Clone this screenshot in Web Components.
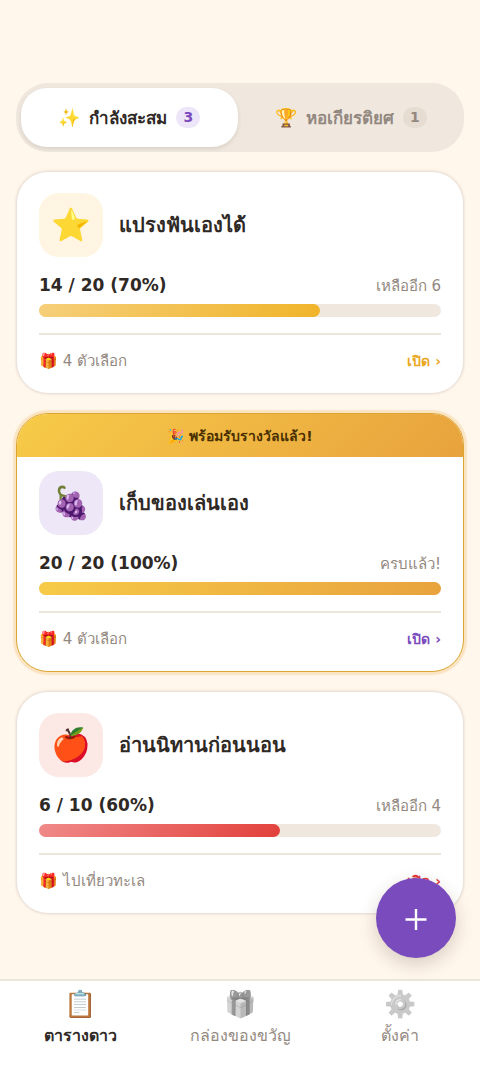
<!DOCTYPE html>
<html lang="th">
<head>
<meta charset="utf-8">
<meta name="viewport" content="width=device-width, initial-scale=1">
<title>ตารางดาว</title>
<style>
  body {
    margin: 0;
    background: #fff6ec;
    color: #2f2926;
    font-family: "DejaVu Sans", sans-serif;
    --muted: #93887f;
    --line: #ece5dc;
    --purple: #7a4bbd;
  }
</style>
</head>
<body>

<star-app>
  <star-tabs>
    <star-tab icon="✨" count="3" active>กำลังสะสม</star-tab>
    <star-tab icon="🏆" count="1">หอเกียรติยศ</star-tab>
  </star-tabs>

  <star-card icon="⭐" done="14" total="20" left="เหลืออีก 6" reward="4 ตัวเลือก"
    style="--tile: #fff5e2; --from: #f6cf7a; --to: #f0b429; --accent: #eaa722">แปรงฟันเองได้</star-card>
  <star-card icon="🍇" done="20" total="20" left="ครบแล้ว!" reward="4 ตัวเลือก" ready
    style="--tile: #ede7f8; --from: #f7cb48; --to: #e8a23d; --accent: #7a4bbd">เก็บของเล่นเอง</star-card>
  <star-card icon="🍎" done="6" total="10" left="เหลืออีก 4" reward="ไปเที่ยวทะเล"
    style="--tile: #fce8e5; --from: #f08a8a; --to: #e2403a; --accent: #e0393a">อ่านนิทานก่อนนอน</star-card>

  <add-button slot="fab"></add-button>
  <bottom-nav slot="nav">
    <nav-item icon="📋" active>ตารางดาว</nav-item>
    <nav-item icon="🎁">กล่องของขวัญ</nav-item>
    <nav-item icon="⚙️">ตั้งค่า</nav-item>
  </bottom-nav>
</star-app>

<script>
// Base class: clones the markup of the element into an open shadow root
class BaseElement extends HTMLElement {
  connectedCallback() {
    if (this.shadowRoot) return;
    const template = document.createElement('template');
    template.innerHTML = this.render();
    this.attachShadow({ mode: 'open' }).appendChild(template.content.cloneNode(true));
  }
}

class StarApp extends BaseElement {
  render() {
    return `
      <style>
        :host {
          display: flex;
          flex-direction: column;
          min-height: 100vh;
        }
        main {
          flex: 1;
          display: flex;
          flex-direction: column;
          gap: 19px;
          padding: 83px 16px 48px;
        }
      </style>
      <main><slot></slot></main>
      <slot name="fab"></slot>
      <slot name="nav"></slot>
    `;
  }
}

class StarTabs extends BaseElement {
  render() {
    return `
      <style>
        :host {
          display: flex;
          gap: 5px;
          padding: 5px;
          border-radius: 32px;
          background: #f0e8df;
        }
      </style>
      <slot></slot>
    `;
  }
}

class StarTab extends BaseElement {
  render() {
    return `
      <style>
        :host {
          display: flex;
          flex: 1;
        }
        button {
          flex: 1;
          display: flex;
          align-items: center;
          justify-content: center;
          gap: 9px;
          height: 59px;
          padding: 0;
          border: 0;
          border-radius: 26px;
          background: none;
          color: var(--muted);
          font: bold 17px/24px "DejaVu Sans", sans-serif;
          white-space: nowrap;
          cursor: pointer;
        }
        .icon {
          font-size: 18px;
        }
        .count {
          min-width: 24px;
          border-radius: 11px;
          background: #e6dcd2;
          font-size: 14px;
          line-height: 21px;
          text-align: center;
        }
        :host([active]) button {
          background: #fff;
          color: #2f2926;
          box-shadow: 0 2px 4px rgba(60, 40, 20, 0.12);
        }
        :host([active]) .count {
          background: #ede5f8;
          color: var(--purple);
        }
      </style>
      <button type="button" aria-pressed="${this.hasAttribute('active')}">
        <span class="icon">${this.getAttribute('icon')}</span>
        <slot></slot>
        <span class="count">${this.getAttribute('count')}</span>
      </button>
    `;
  }
}

class StarCard extends BaseElement {
  render() {
    const done = Number(this.getAttribute('done'));
    const total = Number(this.getAttribute('total'));
    const percent = Math.round(done / total * 100);
    const banner = this.hasAttribute('ready')
      ? '<div class="banner">🎉 พร้อมรับรางวัลแล้ว!</div>' : '';
    return `
      <style>
        :host {
          display: block;
          overflow: hidden;
          border: 1px solid #ebe2d9;
          border-radius: 32px;
          background: #fff;
          box-shadow: 0 0 2px 1px rgba(90, 60, 30, 0.07);
        }
        :host([ready]) {
          border-color: #dca433;
          box-shadow: 0 0 1px 3px #fae4c1;
        }
        .banner {
          padding: 11px 16px 9px;
          background: linear-gradient(135deg, #f7cb48, #e8a23d);
          color: #4a3000;
          font-size: 14px;
          font-weight: bold;
          line-height: 23px;
          text-align: center;
        }
        .body {
          padding: 21px 22px 20px;
        }
        :host([ready]) .body {
          padding-top: 14px;
        }
        header {
          display: flex;
          align-items: center;
          gap: 16px;
        }
        .tile {
          width: 64px;
          border-radius: 20px;
          background: var(--tile);
          font-size: 32px;
          line-height: 64px;
          text-align: center;
        }
        h2 {
          flex: 1;
          margin: 0;
          font-size: 20px;
          line-height: 28px;
        }
        .row {
          display: flex;
          align-items: center;
          justify-content: space-between;
          font-size: 15px;
          line-height: 24px;
          color: var(--muted);
        }
        .stats {
          align-items: baseline;
          margin: 16px 0 6px;
        }
        .stats strong {
          color: #2f2926;
          font-size: 17px;
        }
        .track {
          height: 13px;
          border-radius: 7px;
          background: #f0e8df;
        }
        .fill {
          width: ${percent}%;
          height: 100%;
          border-radius: 7px;
          background: linear-gradient(135deg, var(--from), var(--to));
        }
        footer {
          margin-top: 16px;
          padding-top: 14px;
          border-top: 2px solid var(--line);
        }
        a {
          color: var(--accent);
          font-size: 14px;
          font-weight: bold;
          text-decoration: none;
        }
      </style>
      ${banner}
      <div class="body">
        <header>
          <span class="tile">${this.getAttribute('icon')}</span>
          <h2><slot></slot></h2>
        </header>
        <div class="row stats">
          <strong>${done} / ${total} (${percent}%)</strong>
          <span>${this.getAttribute('left')}</span>
        </div>
        <div class="track" role="progressbar" aria-label="ความคืบหน้า" aria-valuenow="${percent}">
          <div class="fill"></div>
        </div>
        <footer class="row">
          <span>🎁 ${this.getAttribute('reward')}</span>
          <a href="#open">เปิด ›</a>
        </footer>
      </div>
    `;
  }
}

class AddButton extends BaseElement {
  render() {
    return `
      <style>
        /* Floats over the card list */
        :host {
          position: fixed;
          right: 24px;
          bottom: 109px;
          z-index: 2;
        }
        button {
          display: flex;
          align-items: center;
          justify-content: center;
          width: 80px;
          height: 80px;
          padding: 0;
          border: 0;
          border-radius: 50%;
          background: var(--purple);
          box-shadow: 0 6px 18px rgba(60, 40, 20, 0.2);
          cursor: pointer;
        }
      </style>
      <button type="button" aria-label="เพิ่ม">
        <svg width="24" height="24" viewBox="0 0 24 24" fill="none" stroke="#fff" stroke-width="2.4">
          <path d="M12 3v21M1.500 13.500h21"/>
        </svg>
      </button>
    `;
  }
}

class BottomNav extends BaseElement {
  render() {
    return `
      <style>
        :host {
          position: sticky;
          bottom: 0;
          z-index: 1;
          display: block;
        }
        nav {
          display: flex;
          padding: 5px 0 18px;
          border-top: 2px solid var(--line);
          background: #fff;
        }
      </style>
      <nav><slot></slot></nav>
    `;
  }
}

class NavItem extends BaseElement {
  render() {
    return `
      <style>
        :host {
          display: block;
          flex: 1;
        }
        a {
          display: flex;
          flex-direction: column;
          align-items: center;
          gap: 1px;
          color: var(--muted);
          font-size: 16px;
          line-height: 26px;
          text-decoration: none;
        }
        .icon {
          font-size: 26px;
          line-height: 36px;
          filter: grayscale(1);
          opacity: 0.6;
        }
        :host([active]) a {
          color: #2f2926;
          font-weight: bold;
        }
        :host([active]) .icon {
          filter: none;
          opacity: 1;
        }
      </style>
      <a href="#">
        <span class="icon">${this.getAttribute('icon')}</span>
        <span><slot></slot></span>
      </a>
    `;
  }
}

customElements.define('star-app', StarApp);
customElements.define('star-tabs', StarTabs);
customElements.define('star-tab', StarTab);
customElements.define('star-card', StarCard);
customElements.define('add-button', AddButton);
customElements.define('bottom-nav', BottomNav);
customElements.define('nav-item', NavItem);
</script>
</body>
</html>
